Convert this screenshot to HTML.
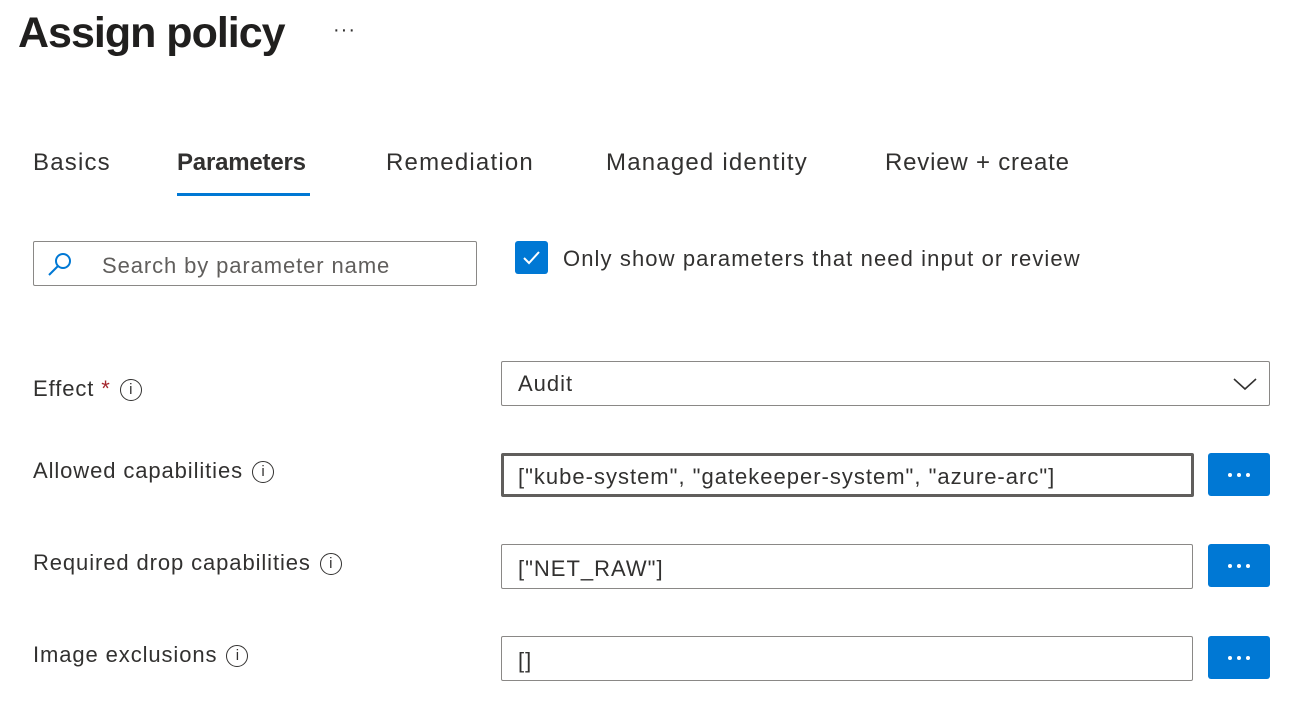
<!DOCTYPE html>
<html><head><meta charset="utf-8"><style>
*{box-sizing:border-box;margin:0;padding:0}
body{width:1309px;height:710px;background:#fff;font-family:"Liberation Sans",sans-serif;color:#323130;position:relative;overflow:hidden}
.a{position:absolute;white-space:nowrap}
.t{font-size:24px;top:149px;color:#323130;letter-spacing:1.2px}
.lbl{font-size:22px;left:33px;letter-spacing:0.9px}
.inp{position:absolute;border:1px solid #8a8886;border-radius:2px;background:#fff;font-size:22px;padding-left:16px;padding-top:4px;display:flex;align-items:center;color:#323130;letter-spacing:1px;white-space:nowrap}
.btn{position:absolute;left:1208px;width:62px;height:43px;background:#0078d4;border-radius:3px;display:flex;align-items:center;justify-content:center;gap:5px}
.btn i{width:4px;height:4px;background:#fff;border-radius:50%;display:block}
.info{display:inline-block;width:22px;height:22px;border:1.5px solid #323130;border-radius:50%;font-size:15px;text-align:center;line-height:19px;vertical-align:middle;margin-left:9px;letter-spacing:0}
</style></head><body>
<div class="a" style="left:18px;top:9px;font-size:43px;font-weight:bold;color:#201f1e;letter-spacing:-1px">Assign policy</div>
<div class="a" style="left:333px;top:19px;font-size:20px;color:#323130;letter-spacing:1px">···</div>
<div class="a t" style="left:33px">Basics</div>
<div class="a t" style="left:177px;font-weight:bold;letter-spacing:-0.2px">Parameters</div>
<div style="position:absolute;left:177px;top:193px;width:133px;height:3px;background:#0078d4"></div>
<div class="a t" style="left:386px">Remediation</div>
<div class="a t" style="left:606px">Managed identity</div>
<div class="a t" style="left:885px;letter-spacing:0.8px">Review + create</div>
<div class="inp" style="left:33px;top:241px;width:444px;height:45px;padding-left:68px;color:#605e5c;letter-spacing:0.9px">Search by parameter name</div>
<svg class="a" style="left:46px;top:250px" width="28" height="28" viewBox="0 0 28 28"><circle cx="17" cy="11" r="7" fill="none" stroke="#0078d4" stroke-width="2"/><path d="M12 16 L3 25" stroke="#0078d4" stroke-width="2"/></svg>
<div style="position:absolute;left:515px;top:241px;width:33px;height:33px;background:#0078d4;border-radius:3px"></div>
<svg class="a" style="left:515px;top:241px" width="33" height="33"><path d="M9 17 L14 22 L24 11" fill="none" stroke="#fff" stroke-width="2"/></svg>
<div class="a" style="left:563px;top:246px;font-size:22px;letter-spacing:1.1px">Only show parameters that need input or review</div>
<div class="a lbl" style="top:376px">Effect <span style="color:#a4262c">*</span><span class="info">i</span></div>
<div class="inp" style="left:501px;top:361px;width:769px;height:45px;align-items:flex-start;padding-top:9px">Audit</div>
<svg class="a" style="left:1232px;top:376px" width="26" height="16"><path d="M2 3 L13 13 L24 3" fill="none" stroke="#323130" stroke-width="1.6"/></svg>
<div class="a lbl" style="top:458px">Allowed capabilities<span class="info">i</span></div>
<div class="inp" style="left:501px;top:453px;width:693px;height:44px;border:3px solid #605e5c;padding-left:14px">["kube-system", "gatekeeper-system", "azure-arc"]</div>
<div class="btn" style="top:453px"><i></i><i></i><i></i></div>
<div class="a lbl" style="top:550px">Required drop capabilities<span class="info">i</span></div>
<div class="inp" style="left:501px;top:544px;width:692px;height:45px">["NET_RAW"]</div>
<div class="btn" style="top:544px"><i></i><i></i><i></i></div>
<div class="a lbl" style="top:642px">Image exclusions<span class="info">i</span></div>
<div class="inp" style="left:501px;top:636px;width:692px;height:45px">[]</div>
<div class="btn" style="top:636px"><i></i><i></i><i></i></div>
</body></html>
